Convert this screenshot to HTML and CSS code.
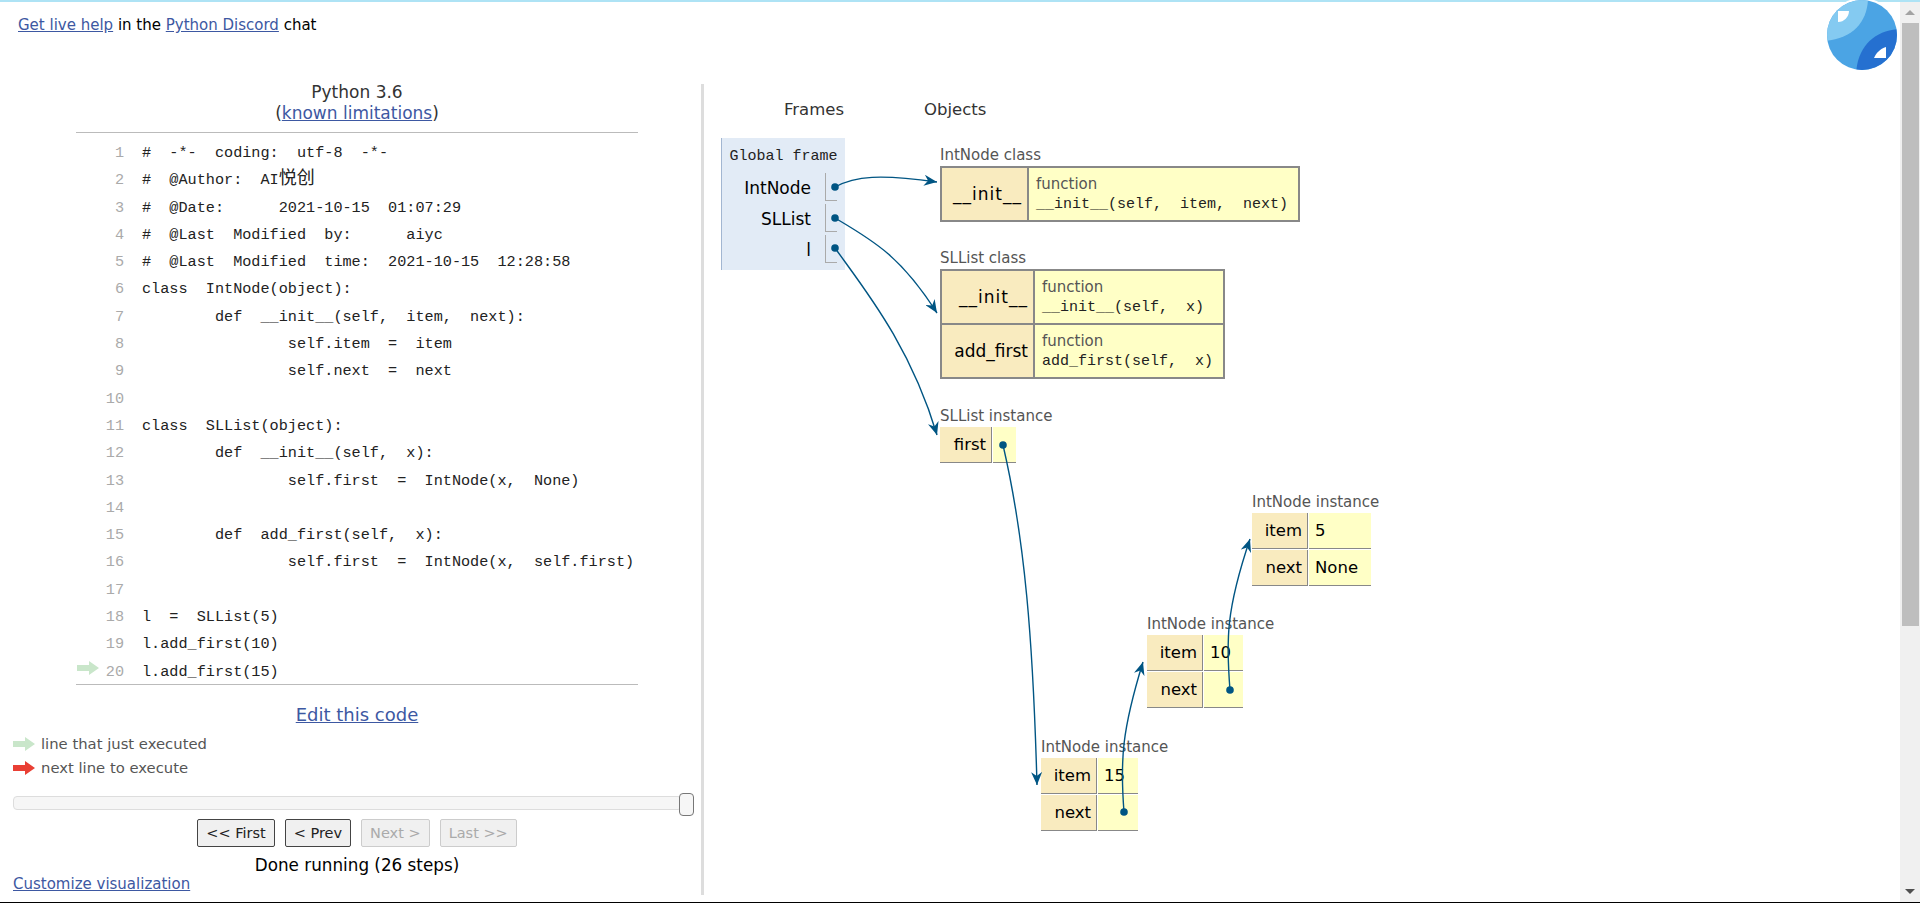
FILE: index.html
```html
<!doctype html>
<html>
  <head>
    <title>Python Tutor</title>
    <link rel="stylesheet" href="styles.css">
  </head>

  <body>
    <div class="top_line"></div>
    <div class="help">
      <a href="#">Get live help</a> in the <a href="#">Python Discord</a> chat
    </div>

    <!-- logo and window scrollbar lie over the page -->
    <svg class="logo" viewBox="0 0 76 76">
      <defs>
        <clipPath id="logo_clip"><circle cx="38" cy="36" r="35" /></clipPath>
      </defs>
      <circle cx="38" cy="36" r="37" fill="#fff" />
      <g clip-path="url(#logo_clip)">
        <rect width="76" height="76" fill="#4ba4e4" />
        <path d="M0 0H44C43 24 28 40 0 42Z" fill="#84caf1" />
        <path d="M76 30C52 31 33 46 32 76H76Z" fill="#2570d0" />
      </g>
      <path d="M14 12H25C25 18 20 23 14 23Z" fill="#fff" />
      <path d="M62 48V59H50C52 54 56 50 62 48Z" fill="#fff" />
    </svg>
    <div class="scrollbar">
      <div class="scroll_up"></div>
      <div class="scroll_thumb"></div>
      <div class="scroll_down"></div>
    </div>

    <div class="main">
      <div class="left">
        <div class="title">
          Python 3.6<br />
          (<a href="#">known limitations</a>)
        </div>

        <div class="code">
          <div class="line"><span class="num">1</span><span class="src">#  -*-  coding:  utf-8  -*-</span></div>
          <div class="line"><span class="num">2</span><span class="src">#  @Author:  AI<span class="cjk">悦创</span></span></div>
          <div class="line"><span class="num">3</span><span class="src">#  @Date:      2021-10-15  01:07:29</span></div>
          <div class="line"><span class="num">4</span><span class="src">#  @Last  Modified  by:      aiyc</span></div>
          <div class="line"><span class="num">5</span><span class="src">#  @Last  Modified  time:  2021-10-15  12:28:58</span></div>
          <div class="line"><span class="num">6</span><span class="src">class  IntNode(object):</span></div>
          <div class="line"><span class="num">7</span><span class="src">        def  __init__(self,  item,  next):</span></div>
          <div class="line"><span class="num">8</span><span class="src">                self.item  =  item</span></div>
          <div class="line"><span class="num">9</span><span class="src">                self.next  =  next</span></div>
          <div class="line"><span class="num">10</span><span class="src"></span></div>
          <div class="line"><span class="num">11</span><span class="src">class  SLList(object):</span></div>
          <div class="line"><span class="num">12</span><span class="src">        def  __init__(self,  x):</span></div>
          <div class="line"><span class="num">13</span><span class="src">                self.first  =  IntNode(x,  None)</span></div>
          <div class="line"><span class="num">14</span><span class="src"></span></div>
          <div class="line"><span class="num">15</span><span class="src">        def  add_first(self,  x):</span></div>
          <div class="line"><span class="num">16</span><span class="src">                self.first  =  IntNode(x,  self.first)</span></div>
          <div class="line"><span class="num">17</span><span class="src"></span></div>
          <div class="line"><span class="num">18</span><span class="src">l  =  SLList(5)</span></div>
          <div class="line"><span class="num">19</span><span class="src">l.add_first(10)</span></div>
          <div class="line">
            <svg class="arrow_icon code_arrow" viewBox="0 0 22 14"><path d="M0 4H12V0L22 7L12 14V10H0Z" fill="#c9e6ca" /></svg>
            <span class="num">20</span><span class="src">l.add_first(15)</span>
          </div>
        </div>

        <div class="edit"><a href="#">Edit this code</a></div>

        <div class="legend">
          <div class="legend_row">
            <svg class="arrow_icon" viewBox="0 0 22 14"><path d="M0 4H12V0L22 7L12 14V10H0Z" fill="#c9e6ca" /></svg>
            line that just executed
          </div>
          <div class="legend_row">
            <svg class="arrow_icon" viewBox="0 0 22 14"><path d="M0 4H12V0L22 7L12 14V10H0Z" fill="#e93f34" /></svg>
            next line to execute
          </div>
        </div>

        <div class="slider"><div class="slider_handle"></div></div>

        <div class="buttons">
          <button class="btn">&lt;&lt; First</button>
          <button class="btn">&lt; Prev</button>
          <button class="btn" disabled>Next &gt;</button>
          <button class="btn" disabled>Last &gt;&gt;</button>
        </div>

        <div class="status">Done running (26 steps)</div>
        <div class="customize"><a href="#">Customize visualization</a></div>
      </div>

      <div class="divider"></div>

      <div class="canvas">
        <div class="headers">
          <span>Frames</span>
          <span>Objects</span>
        </div>

        <div class="frame">
          <div class="frame_title">Global frame</div>
          <div class="frame_row"><span class="frame_name">IntNode</span><span class="frame_val"></span></div>
          <div class="frame_row"><span class="frame_name">SLList</span><span class="frame_val"></span></div>
          <div class="frame_row"><span class="frame_name">l</span><span class="frame_val"></span></div>
        </div>

        <div class="obj obj_intnode_class">
          <div class="obj_label">IntNode class</div>
          <div class="class_table">
            <div class="class_row">
              <div class="class_key key_wide key_init">__init__</div>
              <div class="class_val">
                <div class="fn_label">function</div>
                <div class="fn_sig">__init__(self,  item,  next)</div>
              </div>
            </div>
          </div>
        </div>

        <div class="obj obj_sllist_class">
          <div class="obj_label">SLList class</div>
          <div class="class_table">
            <div class="class_row">
              <div class="class_key key_init">__init__</div>
              <div class="class_val">
                <div class="fn_label">function</div>
                <div class="fn_sig">__init__(self,  x)</div>
              </div>
            </div>
            <div class="class_row">
              <div class="class_key">add_first</div>
              <div class="class_val">
                <div class="fn_label">function</div>
                <div class="fn_sig">add_first(self,  x)</div>
              </div>
            </div>
          </div>
        </div>

        <div class="obj obj_sllist">
          <div class="obj_label">SLList instance</div>
          <div class="inst">
            <div class="inst_key">first</div><div class="inst_val"></div>
          </div>
        </div>

        <div class="obj obj_node5">
          <div class="obj_label">IntNode instance</div>
          <div class="inst">
            <div class="inst_key">item</div><div class="inst_val">5</div>
            <div class="inst_key">next</div><div class="inst_val">None</div>
          </div>
        </div>

        <div class="obj obj_node10">
          <div class="obj_label">IntNode instance</div>
          <div class="inst">
            <div class="inst_key">item</div><div class="inst_val">10</div>
            <div class="inst_key">next</div><div class="inst_val"></div>
          </div>
        </div>

        <div class="obj obj_node15">
          <div class="obj_label">IntNode instance</div>
          <div class="inst">
            <div class="inst_key">item</div><div class="inst_val">15</div>
            <div class="inst_key">next</div><div class="inst_val"></div>
          </div>
        </div>

        <!-- pointers, in page coordinates -->
        <svg class="pointers" viewBox="704 84 1216 819">
          <defs>
            <marker id="head" markerUnits="userSpaceOnUse" markerWidth="13" markerHeight="11" refX="13" refY="5.5" orient="auto">
              <path d="M0 0L13 5.5L0 11L4 5.5Z" fill="#005583" />
            </marker>
          </defs>
          <g fill="none" stroke="#005583" stroke-width="1.4">
            <path d="M835 187C855 176 880 174 937 182" marker-end="url(#head)" />
            <path d="M835 218C872 240 900 255 937 313" marker-end="url(#head)" />
            <path d="M835 248C865 290 910 345 937 435" marker-end="url(#head)" />
            <path d="M1003 445C1025 540 1033 640 1037 785" marker-end="url(#head)" />
            <path d="M1124 812C1120 760 1122 730 1143 662" marker-end="url(#head)" />
            <path d="M1230 690C1226 640 1226 610 1250 539" marker-end="url(#head)" />
          </g>
          <g fill="#005583">
            <circle cx="835" cy="187" r="3.8" />
            <circle cx="835" cy="218" r="3.8" />
            <circle cx="835" cy="248" r="3.8" />
            <circle cx="1003" cy="445" r="3.8" />
            <circle cx="1230" cy="690" r="3.8" />
            <circle cx="1124" cy="812" r="3.8" />
          </g>
        </svg>
      </div>
    </div>
  </body>
</html>
```
FILE: styles.css
```css
html,
body {
  margin: 0;
  height: 903px;
  overflow: hidden;
}

body {
  position: relative;
  box-sizing: border-box;
  border-bottom: 1px solid #000;
  background-color: white;
  color: #222;
  font-family: "DejaVu Sans", sans-serif;
  font-size: 15px;
}

a {
  color: #3d58a2;
}

.top_line {
  height: 2px;
  background-color: #aee3f5;
}

.help {
  height: 82px;
  padding-left: 18px;
  padding-top: 14px;
  box-sizing: border-box;
  line-height: 18px;
  color: #000;
}

/* logo + scrollbar */
.logo {
  position: absolute;
  left: 1824px;
  top: -1px;
  width: 76px;
  height: 76px;
}

.scrollbar {
  position: absolute;
  right: 0;
  top: 2px;
  bottom: 0;
  width: 20px;
  background-color: #f0f0f0;
}

.scroll_up {
  position: absolute;
  left: 5px;
  top: 8px;
  border-left: 5px solid transparent;
  border-right: 5px solid transparent;
  border-bottom: 5px solid #a3a3a3;
}

.scroll_thumb {
  position: absolute;
  left: 2px;
  top: 21px;
  width: 17px;
  height: 603px;
  background-color: #bebebe;
}

.scroll_down {
  position: absolute;
  left: 5px;
  bottom: 8px;
  border-left: 5px solid transparent;
  border-right: 5px solid transparent;
  border-top: 5px solid #505050;
}

.main {
  display: flex;
}

/* left panel */
.left {
  width: 701px;
  flex-shrink: 0;
}

.title {
  margin-top: -2px;
  padding-left: 13px;
  text-align: center;
  font-size: 17px;
  line-height: 21px;
  color: #333;
}

.code {
  position: relative;
  width: 562px;
  margin: 8px 0 0 76px;
  padding-top: 5px;
  border-top: 1px solid #bbb;
  border-bottom: 1px solid #bbb;
  font-family: "Liberation Mono", "Noto Sans CJK SC", monospace;
  font-size: 15.2px;
}

.line {
  display: flex;
  height: 27.3px;
  line-height: 31px;
  white-space: pre;
}

.num {
  width: 48px;
  text-align: right;
  color: #aaa;
}

.src {
  margin-left: 18px;
  color: #222;
}

.cjk {
  font-size: 18px;
  line-height: 18px;
}

.arrow_icon {
  width: 22px;
  height: 14px;
}

.code_arrow {
  position: absolute;
  left: 1px;
  bottom: 9px;
}

.edit {
  margin-top: 19px;
  padding-left: 13px;
  text-align: center;
  font-size: 18px;
  line-height: 22px;
}

.legend {
  margin: 6px 0 0 13px;
  color: #555;
}

.legend_row {
  display: flex;
  align-items: center;
  gap: 6px;
  height: 24px;
  font-size: 14.8px;
}

.slider {
  position: relative;
  height: 12px;
  margin: 16px 19px 0 13px;
  border: 1px solid #ddd;
  border-radius: 4px;
  background-color: #f6f6f6;
}

.slider_handle {
  position: absolute;
  right: -13px;
  top: -4px;
  width: 13px;
  height: 21px;
  border: 1px solid #777;
  border-radius: 4px;
  background-color: #f6f6f6;
}

.buttons {
  display: flex;
  justify-content: center;
  gap: 10px;
  margin-top: 9px;
  padding-left: 13px;
}

.btn {
  height: 28px;
  padding: 0 8px;
  border: 1px solid #444;
  border-radius: 2px;
  background-color: #f0f0f0;
  color: #222;
  font-family: inherit;
  font-size: 14.5px;
}

.btn:disabled {
  border-color: #ccc;
  color: #aaa;
}

.status {
  margin-top: 8px;
  padding-left: 13px;
  text-align: center;
  font-size: 16.8px;
  line-height: 20px;
  color: #000;
}

.customize {
  margin: 0 0 0 13px;
  line-height: 18px;
  font-size: 15px;
}

.divider {
  width: 3px;
  height: 811px;
  background-color: #ddd;
  flex-shrink: 0;
}

/* visualization */
.canvas {
  position: relative;
  flex-grow: 1;
  height: 819px;
}

.headers {
  display: flex;
  gap: 80px;
  padding: 16px 0 0 80px;
  font-size: 16.5px;
  line-height: 20px;
  color: #333;
}

.frame {
  position: absolute;
  left: 17px;
  top: 54px;
  box-sizing: border-box;
  width: 124px;
  height: 132px;
  border-left: 1px solid #a2b6d1;
  background-color: #e2ebf6;
}

.frame_title {
  height: 35px;
  line-height: 38px;
  text-align: center;
  font-family: "Liberation Mono", monospace;
  font-size: 15px;
  white-space: pre;
}

.frame_row {
  display: flex;
  height: 28px;
  margin-bottom: 3px;
  font-size: 17px;
  line-height: 30px;
  color: #000;
}

.frame_name {
  width: 89px;
  text-align: right;
}

.frame_val {
  width: 11px;
  margin-left: 14px;
  border-left: 1px solid #aaa;
  border-bottom: 1px solid #aaa;
}

.obj {
  position: absolute;
}

.obj_label {
  height: 22px;
  line-height: 22px;
  font-size: 15px;
  color: #555;
  white-space: nowrap;
}

.obj_intnode_class { left: 236px; top: 60px; }
.obj_sllist_class { left: 236px; top: 163px; }
.obj_sllist { left: 236px; top: 321px; }
.obj_node5 { left: 548px; top: 407px; }
.obj_node10 { left: 443px; top: 529px; }
.obj_node15 { left: 337px; top: 652px; }

.class_table {
  display: flex;
  flex-direction: column;
  gap: 2px;
  border: 2px solid #888;
  background-color: #888;
}

.class_row {
  display: flex;
  height: 52px;
  gap: 2px;
}

.class_key {
  width: 91px;
  text-align: right;
  padding-right: 5px;
  box-sizing: border-box;
  line-height: 52px;
  font-size: 17px;
  color: #000;
  background-color: #f9ebbf;
}

.key_wide {
  width: 85px;
}

.key_init {
  letter-spacing: 1px;
}

.class_val {
  width: 188px;
  padding-left: 7px;
  box-sizing: border-box;
  background-color: #ffffc6;
}

.obj_intnode_class .class_val {
  width: 269px;
}

.fn_label {
  padding-top: 6px;
  line-height: 20px;
  font-size: 15px;
  color: #555;
}

.fn_sig {
  line-height: 22px;
  font-family: "Liberation Mono", monospace;
  font-size: 15px;
  white-space: pre;
  color: #222;
}

.inst {
  display: grid;
  grid-template-columns: 55px 39px;
  grid-auto-rows: 36px;
  gap: 1px 2px;
  font-size: 16.5px;
  line-height: 35px;
  color: #000;
}

.obj_sllist .inst { grid-template-columns: 51px 23px; }
.obj_node5 .inst { grid-template-columns: 55px 62px; }
.obj_node15 .inst { grid-template-columns: 55px 40px; }

.inst_key {
  padding-right: 5px;
  text-align: right;
  background-color: #f9ebbf;
  border-bottom: 1px solid #888;
  box-shadow: 1px 0 0 #888;
}

.inst_val {
  padding-left: 6px;
  background-color: #ffffc6;
  border-bottom: 1px solid #888;
}

.pointers {
  position: absolute;
  left: 0;
  top: 0;
  width: 1216px;
  height: 819px;
  pointer-events: none;
}
```
